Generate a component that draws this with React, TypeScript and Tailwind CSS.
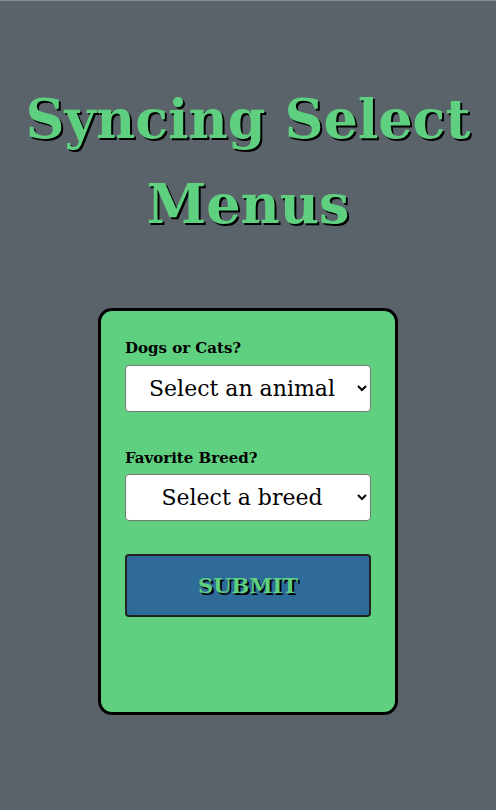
const slab = "font-['DejaVu_Serif','Liberation_Serif',serif]";

export default function App() {
  return (
    <div className={`min-h-[810px] border-t border-[#8a8c8e] bg-[#5a6369] ${slab}`}>
      <h1 className="mx-auto w-[470px] pt-[76px] text-center text-[54px] font-bold leading-[85px] text-[#5fcf80] [text-shadow:2px_2px_0_#000]">
        Syncing Select Menus
      </h1>

      <form className="mx-auto mt-[61px] flex h-[407px] w-[300px] flex-col rounded-[14px] border-[3px] border-black bg-[#5fcf80] px-6 pt-[27px]">
        <label className="text-[15px] font-bold leading-5 text-black">Dogs or Cats?</label>
        <select className="mt-[7px] h-[47px] w-[246px] rounded-[4px] border border-[#767676] bg-white px-2 text-center text-[22px] text-black [text-align-last:center]">
          <option>Select an animal</option>
        </select>

        <label className="mt-[36px] text-[15px] font-bold leading-5 text-black">Favorite Breed?</label>
        <select className="mt-[6px] h-[47px] w-[246px] rounded-[4px] border border-[#767676] bg-white px-2 text-center text-[22px] text-black [text-align-last:center]">
          <option>Select a breed</option>
        </select>

        <button
          type="button"
          className="mt-[33px] h-[63px] w-[246px] rounded-[4px] border-2 border-[#222] bg-[#2f6b98] text-[21px] font-bold uppercase text-[#5fcf80] [text-shadow:2px_2px_0_#000]"
        >
          Submit
        </button>
      </form>
    </div>
  );
}
